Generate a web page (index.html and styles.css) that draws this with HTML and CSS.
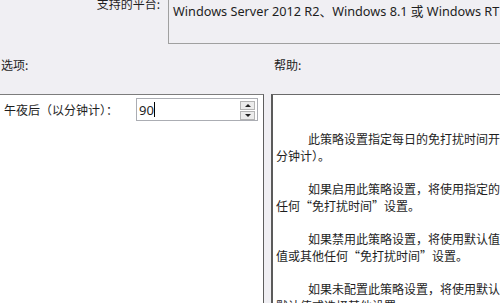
FILE: index.html
```html
<!DOCTYPE html>
<html lang="zh-CN">
<head>
    <meta charset="UTF-8">
    <title>免打扰时间</title>
    <link rel="stylesheet" href="styles.css">
</head>
<body>
    <div class="platform">
        <div class="platform-label">支持的平台:</div>
        <div class="platform-box">Windows Server 2012 R2、Windows 8.1 或 Windows RT</div>
    </div>

    <div class="section-labels">
        <div class="label-options">选项:</div>
        <div class="label-help">帮助:</div>
    </div>

    <div class="panels">
        <!-- 选项 -->
        <div class="options-panel">
            <div class="option-row">
                <span class="option-label">午夜后（以分钟计）：</span>
                <div class="spinbox">
                    <span class="spin-value">90</span><span class="caret"></span>
                    <div class="spin-buttons">
                        <div class="spin-btn"><span class="arrow-up"></span></div>
                        <div class="spin-btn"><span class="arrow-down"></span></div>
                    </div>
                </div>
            </div>
        </div>

        <!-- 帮助 -->
        <div class="help-panel">
            <p>此策略设置指定每日的免打扰时间开始时间（以午夜后的<br>分钟计）。</p>
            <p>如果启用此策略设置，将使用指定的每日开始时间，并忽略其他<br>任何“免打扰时间”设置。</p>
            <p>如果禁用此策略设置，将使用默认值，并忽略此策略中的<br>值或其他任何“免打扰时间”设置。</p>
            <p>如果未配置此策略设置，将使用默认值，用户可以更改<br>默认值或选择其他设置。</p>
        </div>
    </div>
</body>
</html>
```

FILE: styles.css
```css
body {
    margin: 0;
    background-color: #f0eff3;
    font-family: "Noto Sans CJK SC", "Noto Sans", sans-serif;
    font-size: 12px;
    color: #1e1e1e;
    overflow: hidden;
    height: 303px;
}

.platform {
    display: flex;
    margin-top: -24px;
}

.platform-label {
    flex: none;
    width: 160px;
    text-align: right;
    padding-top: 20px;
    line-height: 16px;
}

.platform-box {
    flex: none;
    margin-left: 8px;
    width: 360px;
    height: 40px;
    padding: 26px 0 0 4px;
    border: 1px solid #a0a0a0;
    font-family: "Noto Sans", "Noto Sans CJK SC", sans-serif;
    font-size: 12.7px;
    line-height: 16px;
    white-space: nowrap;
}

.section-labels {
    display: flex;
    margin-top: 13px;
    line-height: 16px;
}

.label-options {
    flex: none;
    width: 273px;
    padding-left: 1px;
}

.panels {
    display: flex;
    margin-top: 21px;
    height: 240px;
}

.options-panel {
    flex: none;
    width: 263px;
    background-color: #ffffff;
    border-top: 1px solid #7c7c7c;
    border-right: 1px solid #5e5e5e;
}

.option-row {
    display: flex;
    align-items: center;
    padding: 3px 0 0 4px;
}

.option-label {
    width: 132px;
}

.spinbox {
    position: relative;
    width: 118px;
    height: 21px;
    border: 1px solid #abadb3;
    background-color: #ffffff;
    display: flex;
    align-items: center;
    padding-left: 2px;
    font-family: "Noto Sans", sans-serif;
    font-size: 13px;
}

.caret {
    display: inline-block;
    width: 1px;
    height: 15px;
    background-color: #000000;
}

.spin-buttons {
    position: absolute;
    right: 2px;
    top: 2px;
    display: flex;
    flex-direction: column;
    gap: 1px;
}

.spin-btn {
    width: 13px;
    height: 7px;
    border: 1px solid #b4b4b4;
    background-color: #ececec;
    display: flex;
    align-items: center;
    justify-content: center;
}

.arrow-up,
.arrow-down {
    width: 0;
    height: 0;
    border-left: 3px solid transparent;
    border-right: 3px solid transparent;
}

.arrow-up {
    border-bottom: 3px solid #222;
}

.arrow-down {
    border-top: 3px solid #222;
}

.help-panel {
    flex: none;
    margin-left: 7px;
    width: 320px;
    background-color: #ffffff;
    border-top: 1px solid #6a6a6a;
    border-left: 2px solid #5b5b5b;
    padding: 36px 0 0 3px;
    line-height: 16.67px;
    white-space: nowrap;
    overflow: hidden;
}

.help-panel p {
    margin: 0 0 16.67px 0;
    text-indent: 32px;
}
```
